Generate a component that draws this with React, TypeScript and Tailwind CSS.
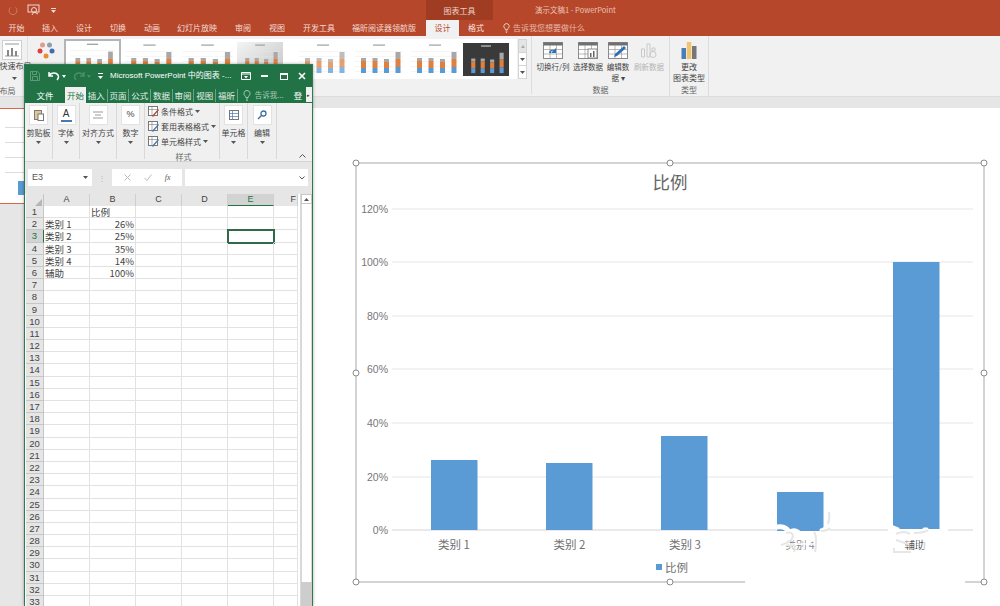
import React from "react";

const font = { fontFamily: '"Noto Sans CJK SC", "Noto Sans", sans-serif' };
const latin = '"Liberation Sans", "Noto Sans CJK SC", sans-serif';
const cjk = '"Noto Sans CJK SC", "Liberation Sans", sans-serif';

function MiniChart({ dark, pale, shade, w, h = 34 }: { dark?: boolean; pale?: boolean; shade?: boolean; w: number; h?: number }) {
  const bars = [
    [3, 7, 5],
    [3, 7, 5],
    [3, 6, 5],
    [7, 8, 6],
  ];
  return (
    <svg width={w} height={h} viewBox="0 0 56 34" preserveAspectRatio="none" className="shrink-0">
      <defs>
        <linearGradient id="shadeG" x1="0" y1="0" x2="1" y2="1">
          <stop offset="0" stopColor="#f4f4f4" />
          <stop offset="1" stopColor="#c4c4c4" />
        </linearGradient>
      </defs>
      <rect width="56" height="34" fill={dark ? "#3a3a3a" : shade ? "url(#shadeG)" : "#ffffff"} />
      <rect x="22" y="2.500" width="12" height="1.200" fill={dark ? "#cccccc" : "#a0a0a0"} />
      {!dark && [9, 14, 19, 24, 29].map((y) => <rect key={y} x="4" y={y} width="48" height="0.400" fill="#e8e8e8" />)}
      {bars.map((b, i) => {
        const x = 10 + i * 11.5;
        const base = 31;
        return (
          <g key={i} opacity={pale ? 0.75 : 1}>
            <rect x={x} y={base - b[2]} width="5" height={b[2]} fill="#5b9bd5" />
            <rect x={x} y={base - b[2] - b[1]} width="5" height={b[1]} fill="#e0803f" />
            <rect x={x} y={base - b[2] - b[1] - b[0]} width="5" height={b[0]} fill="#aaa8a6" />
          </g>
        );
      })}
    </svg>
  );
}

function Chevron({ className = "" }: { className?: string }) {
  return (
    <svg width="5" height="3" viewBox="0 0 5 3" className={className}>
      <path d="M0 0h5L2.500 3z" fill="#555" />
    </svg>
  );
}

function TableIcon({ children }: { children?: React.ReactNode }) {
  const c = "#8a8a8a";
  return (
    <svg width="20" height="17" viewBox="0 0 20 17">
      <rect x="0.500" y="0.500" width="19" height="16" fill="#fff" stroke={c} />
      <rect x="0.500" y="0.500" width="19" height="3" fill="#6f6f6f" />
      <path d="M0 7.500h20M0 12h20M7 3v14M13.500 3v14" stroke={c} strokeWidth="0.600" />
      {children}
    </svg>
  );
}

function DataBtn({ label, icon, w, disabled }: { label: React.ReactNode; icon: React.ReactNode; w: string; disabled?: boolean }) {
  return (
    <div className={`${w} flex flex-col items-center pt-[5px] text-[7.5px] leading-[11px] text-center whitespace-nowrap ${disabled ? "text-[#b4b4b4]" : "text-[#444]"}`}>
      <div className="h-[18px] flex items-center">{icon}</div>
      <div className="mt-[2px]">{label}</div>
    </div>
  );
}

function XBtn({ label, w, children }: { label: string; w: string; children: React.ReactNode }) {
  return (
    <div className={`${w} flex flex-col items-center border-r border-[#d8d8d8] h-[56px] pt-[2px] shrink-0`}>
      <div className="w-[19px] h-[20px] bg-white border border-[#e2e2e2] flex items-center justify-center">{children}</div>
      <div className="text-[8px] leading-[10px] mt-[3px] text-[#444] whitespace-nowrap">{label}</div>
      <Chevron className="mt-[3px]" />
    </div>
  );
}

function StyleRow({ label, color }: { label: string; color: string }) {
  return (
    <div className="flex items-center gap-[2px] h-[15px] text-[8px] text-[#444] whitespace-nowrap">
      <svg width="11" height="11" viewBox="0 0 11 11">
        <rect x="0.500" y="0.500" width="9" height="9" fill="#fff" stroke="#777" />
        <path d="M0.500 3.500h9M4 0.500v9" stroke="#777" strokeWidth="0.600" />
        <path d="M4 10l6-7 1 1-6 7z" fill={color} />
      </svg>
      <span>{label}</span>
      <Chevron />
    </div>
  );
}

const rows: Record<number, string[]> = {
  1: ["", "比例"],
  2: ["类别 1", "26%"],
  3: ["类别 2", "25%"],
  4: ["类别 3", "35%"],
  5: ["类别 4", "14%"],
  6: ["辅助", "100%"],
};

const colW = ["w-[46px]", "w-[46px]", "w-[46px]", "w-[46px]", "w-[46px]", "w-[24px]"];

function Sheet() {
  const headers = ["A", "B", "C", "D", "E", "F"];
  return (
    <div className="flex-1 flex min-h-0 overflow-hidden pl-px pr-[3px]">
      <div className="w-[272px] shrink-0">
        <div className="flex h-[12px] bg-[#e6e6e6] text-[9px] text-[#444] leading-[11px]" style={{ fontFamily: latin }}>
          <div className="w-[18px] shrink-0 flex items-end justify-end pr-px border-r border-[#c6c6c6]">
            <svg width="7" height="7" viewBox="0 0 7 7"><path d="M7 0v7H0z" fill="#b5b5b5" /></svg>
          </div>
          {headers.map((h, i) => (
            <div
              key={h}
              className={`${colW[i]} shrink-0 text-center border-r border-[#cfcfcf] ${h === "E" ? "bg-[#d3d3d3] border-b border-b-[#217346] text-[#217346]" : ""} ${h === "F" ? "text-right pr-px" : ""}`}
            >
              {h}
            </div>
          ))}
        </div>
        {Array.from({ length: 33 }, (_, i) => i + 1).map((r) => {
          const d = rows[r] || ["", ""];
          return (
            <div key={r} className="flex h-[12.19px] text-[9.5px] leading-[12px]">
              <div
                className={`w-[18px] shrink-0 text-center border-r border-b border-[#c6c6c6] text-[#444] ${r === 3 ? "bg-[#d3d3d3] border-r-[#217346] text-[#217346]" : "bg-[#e6e6e6]"}`}
                style={{ fontFamily: latin }}
              >
                {r}
              </div>
              {colW.map((w, c) => (
                <div
                  key={c}
                  className={`${w} shrink-0 border-r border-b border-[#e2e2e2] text-[#444] whitespace-nowrap px-px ${c === 1 && r > 1 ? "text-right" : ""} ${c === 4 && r === 3 ? "outline-2 -outline-offset-1 outline-[#2f6b4b]" : ""}`}
                  style={{ fontFamily: cjk }}
                >
                  {c < 2 ? d[c] : ""}
                </div>
              ))}
            </div>
          );
        })}
      </div>
      <div className="w-[12px] ml-[2px] shrink-0 bg-[#f0f0f0] border-l border-[#d8d8d8] flex flex-col">
        <div className="h-[10px] bg-white border border-[#c8c8c8] flex items-center justify-center">
          <svg width="5" height="3" viewBox="0 0 5 3"><path d="M0 3h5L2.500 0z" fill="#555" /></svg>
        </div>
        <div className="h-[378px] bg-white border-x border-[#d8d8d8]" />
        <div className="flex-1 bg-[#cdcdcd]" />
      </div>
    </div>
  );
}

function ExcelWindow() {
  const tabs = ["插入", "页面", "公式", "数据", "审阅", "视图", "福昕"];
  return (
    <div className="absolute left-[24px] top-[64px] w-[289px] h-[542px] bg-white border border-[#2f7a52] border-b-0 flex flex-col overflow-hidden shadow-[0_0_3px_rgba(0,0,0,0.35)]" style={font}>
      {/* title */}
      <div className="h-[22px] bg-[#217346] flex items-center text-white shrink-0 pl-[5px]">
        <svg width="10" height="10" viewBox="0 0 10 10" className="shrink-0"><path d="M.5.5h7l2 2v7H.5zM2.500.5v3h4v-3M2.500 9.500v-4h5v4" fill="none" stroke="#5d9a78" /></svg>
        <svg width="12" height="10" viewBox="0 0 12 10" className="ml-[8px] shrink-0"><path d="M1 4.500C3 1.500 8 1 10 4c1 2 .5 3.500-1 5M1 1v4h4" fill="none" stroke="#fff" strokeWidth="1.500" /></svg>
        <svg width="4" height="3" viewBox="0 0 4 3" className="ml-[2px] shrink-0"><path d="M0 0h4L2 3z" fill="#fff" /></svg>
        <svg width="12" height="10" viewBox="0 0 12 10" className="ml-[7px] shrink-0"><path d="M11 4.500C9 1.500 4 1 2 4c-1 2-.5 3.500 1 5M11 1v4H7" fill="none" stroke="#4c8d69" strokeWidth="1.500" /></svg>
        <svg width="4" height="3" viewBox="0 0 4 3" className="ml-[2px] shrink-0"><path d="M0 0h4L2 3z" fill="#4c8d69" /></svg>
        <svg width="5" height="6" viewBox="0 0 5 6" className="ml-[7px] shrink-0"><path d="M0 0h5v1H0zM0 3h5L2.500 6z" fill="#fff" /></svg>
        <span className="ml-[7px] w-[118px] shrink-0 text-[8px] whitespace-nowrap" style={{ fontFamily: latin }}>Microsoft PowerPoint 中的图表 -...</span>
        <svg width="10" height="8" viewBox="0 0 10 8" className="ml-[13px] shrink-0"><path d="M.5.5h9v7h-9zM.5 2h9" fill="none" stroke="#fff" /><path d="M3 4h4L5 6.500z" fill="#fff" /></svg>
        <div className="ml-[10px] w-[7px] h-[2px] bg-white shrink-0" />
        <div className="ml-[12px] w-[8px] h-[7px] border border-white border-t-2 shrink-0" />
        <svg width="8" height="8" viewBox="0 0 8 8" className="ml-[10px] shrink-0"><path d="M1 1l6 6M7 1L1 7" stroke="#fff" strokeWidth="1.600" /></svg>
      </div>
      {/* tabs */}
      <div className="h-[16px] bg-[#217346] flex items-stretch text-[8.5px] text-white shrink-0 leading-[16px] whitespace-nowrap">
        <div className="w-[40px] text-center">文件</div>
        <div className="w-[21px] bg-[#f0f0f0] text-[#217346] text-center">开始</div>
        {tabs.map((t) => (
          <div key={t} className="w-[21.7px] text-center text-[#e4efe8] border-r border-[#6ba285] h-[13px] mt-[2px] leading-[13px]">{t}</div>
        ))}
        <svg width="8" height="11" viewBox="0 0 8 11" className="ml-[5px] mt-[3px] shrink-0"><path d="M4 .5a3 3 0 0 1 2 5.300c-.6.6-.8 1-.8 1.700H2.800c0-.7-.2-1.100-.8-1.700A3 3 0 0 1 4 .5zM3 9h2M3.300 10.500h1.400" fill="none" stroke="#a4c9b4" /></svg>
        <div className="ml-[4px] w-[27px] text-[7.500px] text-[#a4c9b4]">告诉我...</div>
        <div className="ml-[12px] w-[10px]">登</div>
        <div className="w-[6px] ml-[2px] h-[15px] bg-[#f0f0f0] text-[#333] text-[5px] text-center">▸</div>
      </div>
      {/* ribbon */}
      <div className="h-[59px] bg-[#f0f0f0] flex border-b border-[#d4d4d4] shrink-0">
        <XBtn label="剪贴板" w="w-[28px]">
          <svg width="10" height="12" viewBox="0 0 10 12"><rect x="0.500" y="1.500" width="7" height="9" fill="#d9c7a5" stroke="#8d7a5a" /><rect x="4" y="5" width="5.500" height="6.500" fill="#fff" stroke="#777" /></svg>
        </XBtn>
        <XBtn label="字体" w="w-[27px]">
          <div className="flex flex-col items-center text-[10px] leading-[10px] text-[#333]" style={{ fontFamily: latin }}>A<div className="w-[11px] h-[2px] bg-[#4a78b0] mt-[1px]" /></div>
        </XBtn>
        <XBtn label="对齐方式" w="w-[37px]">
          <svg width="10" height="9" viewBox="0 0 10 9"><path d="M0 1h10M2 4h6M0 7h10" stroke="#999" strokeWidth="1.200" /></svg>
        </XBtn>
        <XBtn label="数字" w="w-[28px]">
          <span className="text-[9px] text-[#444]" style={{ fontFamily: latin }}>%</span>
        </XBtn>
        <div className="w-[75px] border-r border-[#d8d8d8] h-[56px] pl-[3px] pt-px shrink-0">
          <StyleRow label="条件格式" color="#b04a3a" />
          <StyleRow label="套用表格格式" color="#4a78b0" />
          <StyleRow label="单元格样式" color="#4a78b0" />
          <div className="text-[8px] text-center text-[#666] leading-[10px] mt-[3px]">样式</div>
        </div>
        <XBtn label="单元格" w="w-[28px]">
          <svg width="10" height="10" viewBox="0 0 10 10"><rect x="0.500" y="0.500" width="9" height="9" fill="#fff" stroke="#777" /><path d="M0 3.500h10M0 6.500h10M3.500 0v10" stroke="#4a78b0" strokeWidth="0.700" /></svg>
        </XBtn>
        <XBtn label="编辑" w="w-[29px]">
          <svg width="10" height="10" viewBox="0 0 10 10"><circle cx="6.500" cy="3.500" r="2.500" fill="none" stroke="#3f6f9f" strokeWidth="1.300" /><path d="M4.500 5.500L1 9" stroke="#3f6f9f" strokeWidth="1.500" /></svg>
        </XBtn>
        <div className="flex-1 flex items-end justify-end pr-[6px] pb-[3px]">
          <svg width="7" height="4" viewBox="0 0 7 4"><path d="M.5 3.500l3-3 3 3" fill="none" stroke="#555" /></svg>
        </div>
      </div>
      {/* formula */}
      <div className="h-[32px] bg-[#e6e6e6] flex items-center shrink-0 pl-[3px] pb-[1px]">
        <div className="w-[64px] h-[17px] bg-white flex items-center justify-between px-[4px] text-[9px] text-[#555]" style={{ fontFamily: latin }}>
          E3<Chevron />
        </div>
        <div className="w-[20px] text-center text-[#b5b5b5] text-[8px]">⋮</div>
        <div className="w-[70px] h-[17px] bg-white flex items-center justify-around px-[5px] text-[#bbb] text-[9px]">
          <svg width="7" height="7" viewBox="0 0 7 7"><path d="M.5.5l6 6M6.500.5l-6 6" stroke="#bbb" /></svg>
          <svg width="8" height="7" viewBox="0 0 8 7"><path d="M.5 4l2.500 2.500L7.500.5" fill="none" stroke="#bbb" /></svg>
          <span className="text-[#555] italic text-[8px]" style={{ fontFamily: '"Liberation Serif", serif' }}>fx</span>
        </div>
        <div className="w-[123px] h-[17px] ml-[3px] bg-white flex items-center justify-end pr-[3px]">
          <svg width="6" height="4" viewBox="0 0 6 4"><path d="M.5.500l2.500 2.500L5.500.5" fill="none" stroke="#555" /></svg>
        </div>
      </div>
      <Sheet />
    </div>
  );
}

const topTabs = [
  ["开始", "w-[33px]"],
  ["插入", "w-[34px]"],
  ["设计", "w-[34px]"],
  ["切换", "w-[34px]"],
  ["动画", "w-[34px]"],
  ["幻灯片放映", "w-[56px]"],
  ["审阅", "w-[36px]"],
  ["视图", "w-[32px]"],
  ["开发工具", "w-[52px]"],
  ["福昕阅读器领航版", "w-[78px]"],
];

function Chart() {
  const ticks = [
    ["120%", 209],
    ["100%", 262],
    ["80%", 316],
    ["60%", 369],
    ["40%", 423],
    ["20%", 477],
    ["0%", 530],
  ] as [string, number][];
  const bars = [
    [431, 460, 530],
    [546, 463, 530],
    [661, 436, 530],
    [777, 492, 531],
    [893, 262, 529],
  ];
  const handles = [
    [356, 163],
    [670, 163],
    [984, 163],
    [356, 373],
    [984, 373],
    [356, 582],
    [670, 582],
    [984, 582],
  ];
  return (
    <svg width="687" height="498" viewBox="313 108 687 498" className="block" style={{ fontFamily: cjk }}>
      {ticks.map(([t, y]) => (
        <g key={t}>
          <line x1="392" x2="973" y1={y} y2={y} stroke={y === 530 ? "#d4d4d4" : "#e6e6e6"} />
          <text x="388" y={y + 4} textAnchor="end" fontSize="10.500" fill="#777" style={{ fontFamily: latin }}>{t}</text>
        </g>
      ))}
      <text x="670" y="189" textAnchor="middle" fontSize="17.500" fill="#666">比例</text>
      {bars.map(([x, t, b]) => (
        <rect key={x} x={x} y={t} width="46.500" height={b - t} fill="#5b9bd5" />
      ))}
      {["类别 1", "类别 2", "类别 3"].map((t, i) => (
        <text key={t} x={454 + i * 115.500} y="549" textAnchor="middle" fontSize="11.500" fill="#707070">{t}</text>
      ))}
      {/* watermark washing out the last two labels */}
      <rect x="772" y="531" width="60" height="24" fill="#fff" />
      <rect x="888" y="529" width="60" height="26" fill="#fff" />
      <text x="800" y="549" textAnchor="middle" fontSize="10.500" fill="#8a8a8a">类别 4</text>
      <text x="915" y="549" textAnchor="middle" fontSize="10.500" fill="#555">辅助</text>
      <g fill="none" stroke="#fff" strokeLinecap="round">
        <path d="M777 527c6-1 10 1 12 5M792 531c3-1 6 1 8 3" strokeWidth="5" />
        <path d="M782 544h36M788 540l4 9M804 538v12M810 541h10" strokeWidth="1.300" />
        <path d="M896 541h14M893 546h16M918 539v10M924 539v10M905 537l5 3" strokeWidth="1.200" />
        <path d="M893 527l5 2M909 531h4M924 529h3" strokeWidth="3" />
        <path d="M821 530c3-1 6-3 7-7M823 536c4 0 6-2 5-6" strokeWidth="3" />
      </g>
      <g fill="none" stroke="#e6e6e6" strokeWidth="2">
        <path d="M786 533c6-2 9 2 5 7-3 3-7 4-10 5M788 546c5-2 8 0 6 6" />
        <path d="M814 532c3 3 2 16 1 20M821 531c4 0 7-1 9-3M829 512c1 5 0 9-1 12" />
        <path d="M896 534c6-3 10-3 14 0M896 540l12 4M893 552h18M914 533c5 0 11-1 14-3M894 548v5" />
      </g>
      <rect x="656" y="564" width="6" height="6" fill="#5b9bd5" />
      <text x="665" y="572" fontSize="11.500" fill="#707070">比例</text>
      <path d="M965 582H984V163H356V582H745" fill="none" stroke="#a8a8a8" strokeWidth="1" />
      {handles.map(([x, y]) => (
        <circle key={`${x}-${y}`} cx={x} cy={y} r="3" fill="#fff" stroke="#8a8a8a" />
      ))}
    </svg>
  );
}

export default function App() {
  return (
    <div className="relative w-[1000px] h-[606px] overflow-hidden bg-white" style={font}>
      {/* title row */}
      <div className="h-[20px] bg-[#b7472a] flex items-center text-[#e8c4b8]">
        <svg width="10" height="10" viewBox="0 0 10 10" className="ml-[8px] shrink-0"><path d="M2.500 2.500A4 4 0 1 0 7.500 2.500" fill="none" stroke="#cf7c62" /></svg>
        <svg width="14" height="12" viewBox="0 0 14 12" className="ml-[9px] shrink-0"><rect x="1" y="1" width="11" height="7" fill="none" stroke="#f0d8d0" /><circle cx="7" cy="6" r="2.500" fill="none" stroke="#f0d8d0" /><path d="M7 8l-2 3M7 8l4 2" stroke="#f0d8d0" /></svg>
        <svg width="5" height="5" viewBox="0 0 5 5" className="ml-[10px] shrink-0"><path d="M0 0h5v1H0zM0 2h5L2.500 5z" fill="#f0d8d0" /></svg>
        <div className="ml-[370px] w-[67px] h-[20px] bg-[#9f3c22] text-[8px] text-center leading-[21px] text-[#ecd0c6] shrink-0">图表工具</div>
        <div className="ml-[42px] text-[7.500px] whitespace-nowrap">演示文稿1 - PowerPoint</div>
      </div>
      {/* tab row */}
      <div className="h-[16px] bg-[#b7472a] flex items-stretch text-[8px] text-[#f3dcd4] leading-[16px] whitespace-nowrap">
        {topTabs.map(([t, w]) => (
          <div key={t} className={`${w} text-center shrink-0`}>{t}</div>
        ))}
        <div className="w-[33px] ml-[3px] bg-[#f1f1f1] text-[#b7472a] text-center shrink-0">设计</div>
        <div className="w-[34px] text-center shrink-0 text-[#f8e8e2]">格式</div>
        <div className="flex items-center ml-[10px] text-[#e6b9a9] gap-[3px]">
          <svg width="7" height="10" viewBox="0 0 8 11"><path d="M4 .5a3 3 0 0 1 2 5.300c-.6.6-.8 1-.8 1.700H2.800c0-.7-.2-1.100-.8-1.700A3 3 0 0 1 4 .5zM3 9h2M3.300 10.500h1.400" fill="none" stroke="#f3dcd4" /></svg>
          告诉我您想要做什么
        </div>
      </div>
      {/* ribbon */}
      <div className="h-[60px] bg-[#f1f1f1] flex text-[#444] shrink-0">
        <div className="w-[28px] shrink-0 border-r border-[#e0e0e0] flex flex-col items-center pt-[4px] text-[8px] leading-[10px] whitespace-nowrap">
          <div className="w-[20px] h-[20px] mr-[4px] bg-white border border-[#cfcfcf] flex items-center justify-center">
            <svg width="16" height="14" viewBox="0 0 16 14"><path d="M1 1h14M1 13h14" stroke="#999" /><rect x="3" y="7" width="2" height="6" fill="#888" /><rect x="7" y="5" width="2" height="8" fill="#888" /><rect x="11" y="8" width="2" height="5" fill="#888" /></svg>
          </div>
          <div className="mt-[1px] ml-[4px]">快速布局</div>
          <Chevron className="mt-[6px] ml-[2px]" />
          <div className="mt-[6px] mr-[12px] text-[#666]">布局</div>
        </div>
        <div className="w-[36px] shrink-0 flex justify-center pt-[6px]">
          <svg width="18" height="18" viewBox="0 0 18 18">
            <circle cx="5.500" cy="3" r="2.500" fill="#e39b8a" />
            <circle cx="12.500" cy="3" r="2.500" fill="#8fa0a8" />
            <circle cx="3" cy="9" r="2.500" fill="#d9443a" />
            <circle cx="15" cy="9" r="2.500" fill="#3f6fb0" />
            <circle cx="9" cy="14" r="2.500" fill="#ed8a35" />
          </svg>
        </div>
        {/* gallery */}
        <div className="w-[453px] h-[40px] mt-[3px] bg-white flex items-center shrink-0 overflow-hidden">
          <div className="border-2 border-[#b5b5b5] flex shrink-0"><MiniChart w={53} h={36} /></div>
          <MiniChart w={57} />
          <MiniChart w={59} />
          <div className="w-[58px] shrink-0 flex"><MiniChart w={46} shade /></div>
          <MiniChart w={56} pale />
          <MiniChart w={56} />
          <MiniChart w={56} />
          <MiniChart w={46} h={33} dark />
        </div>
        <div className="w-[9px] h-[40px] mt-[3px] ml-px shrink-0 flex flex-col text-center">
          <div className="flex-1 bg-[#e4e4e4] border border-[#d4d4d4] flex items-center justify-center"><svg width="4" height="3" viewBox="0 0 4 3"><path d="M0 3h4L2 0z" fill="#aaa" /></svg></div>
          <div className="flex-1 bg-white border-x border-[#d4d4d4] flex items-center justify-center"><Chevron /></div>
          <div className="flex-1 bg-white border border-[#d4d4d4] flex items-center justify-center"><Chevron /></div>
        </div>
        <div className="w-[5px] border-r border-[#dcdcdc] h-[58px] shrink-0" />
        {/* data group */}
        <div className="w-[138px] shrink-0 border-r border-[#dcdcdc] h-[60px] flex flex-col">
          <div className="flex flex-1">
            <DataBtn w="w-[42px]" label="切换行/列" icon={
              <TableIcon><path d="M6 11c0-3 3-4 5-3l2-2v5H8l2-2c-1-.5-2 0-2 2z" fill="#2f6fb5" /></TableIcon>
            } />
            <DataBtn w="w-[28px]" label="选择数据" icon={
              <TableIcon><rect x="10" y="7" width="9" height="9" fill="#fff" stroke="#8a8a8a" /><rect x="12" y="11" width="1.500" height="4" fill="#666" /><rect x="15" y="9" width="1.500" height="6" fill="#666" /></TableIcon>
            } />
            <DataBtn w="w-[32px]" label={<span>编辑数<br />据 ▾</span>} icon={
              <TableIcon><path d="M6 15l1-3L16 4l2 2-9 8z" fill="#2f6fb5" /></TableIcon>
            } />
            <DataBtn w="w-[30px]" disabled label="刷新数据" icon={
              <svg width="20" height="17" viewBox="0 0 20 17"><path d="M2.500 7h3v8h-3zM8 2h3v13H8zM13 6h3v3h-3z" fill="none" stroke="#c9c9c9" /><circle cx="14" cy="12.500" r="3" fill="none" stroke="#c9c9c9" /></svg>
            } />
          </div>
          <div className="text-center text-[8px] leading-[10px] text-[#666] pb-px">数据</div>
        </div>
        {/* type group */}
        <div className="w-[39px] shrink-0 border-r border-[#dcdcdc] h-[60px] flex flex-col items-center pt-[5px] text-[8px] leading-[11px] text-center">
          <svg width="16" height="18" viewBox="0 0 16 18"><rect x="0.500" y="7" width="4.500" height="11" fill="#4a7eb5" /><rect x="5.800" y="1" width="4.500" height="17" fill="#f0c36d" /><rect x="11" y="5" width="4.500" height="13" fill="#777" /></svg>
          <div className="mt-[2px] whitespace-nowrap">更改<br />图表类型</div>
          <div className="mt-[2px] text-[#666] leading-[10px]">类型</div>
        </div>
      </div>
      {/* strip */}
      <div className="h-[12px] bg-[#e6e6e6] border-t border-[#dcdcdc]" />
      {/* workspace */}
      <div className="flex h-[498px]">
        <div className="w-[313px] shrink-0 bg-[#e6e6e6]">
          <div className="w-[24px] h-[96px] bg-white border-y border-[#d9674a] overflow-hidden flex flex-col gap-[14px] pt-[18px] pl-[5px]">
            {[0, 1, 2, 3].map((i) => (
              <div key={i} className="w-[19px] h-px bg-[#dcdcdc] shrink-0" />
            ))}
            <div className="w-[6px] h-[14px] bg-[#5b9bd5] ml-[13px] -mt-[6px] shrink-0" />
          </div>
        </div>
        <Chart />
      </div>
      <ExcelWindow />
    </div>
  );
}
